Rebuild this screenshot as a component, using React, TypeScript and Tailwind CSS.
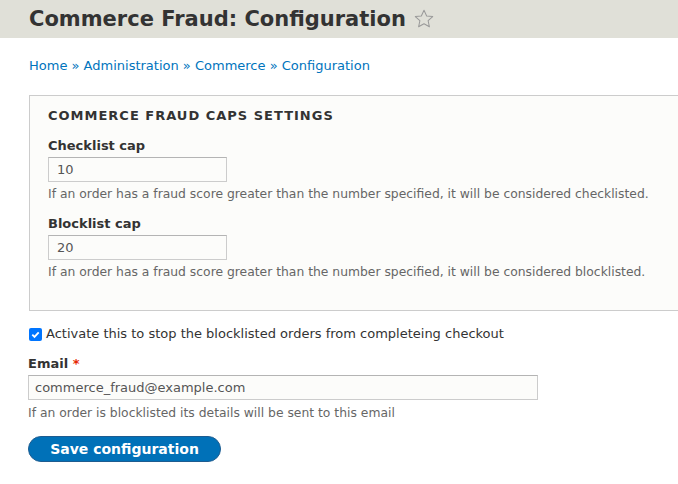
import React from "react";

const font = { fontFamily: '"DejaVu Sans", "Liberation Sans", sans-serif' };

export default function App() {
  return (
    <div className="w-[678px] h-[484px] overflow-hidden bg-white text-[#333]" style={font}>
      <div className="h-[38px] bg-[#e0e0d8] pl-[29px] flex items-center">
        <h1 className="text-[21px] font-bold text-[#333] leading-none flex items-center">
          Commerce Fraud: Configuration
          <svg width="22" height="22" viewBox="0 0 24 24" className="ml-[7px]" fill="none" stroke="#999" strokeWidth="1.1" strokeLinejoin="round">
            <path d="M12 2.5l2.9 6.2 6.6.7-5 4.5 1.4 6.6L12 17.2l-5.9 3.3 1.4-6.6-5-4.5 6.6-.7z" />
          </svg>
        </h1>
      </div>
      <div className="pl-[29px] pt-[20px] text-[13px] text-[#0074bd] leading-[16px]">
        Home » Administration » Commerce » Configuration
      </div>
      <div className="pl-[29px] pt-[21px]">
        <div className="border border-[#ccc] border-r-0 bg-[#fcfcfa] h-[216px] pl-[18px] pt-[12px]">
          <div className="text-[13px] font-bold uppercase tracking-[1px] text-[#333] leading-[16px]">
            Commerce Fraud Caps Settings
          </div>
          <div className="mt-[14px] text-[13px] font-bold leading-[16px]">Checklist cap</div>
          <div className="mt-[3px] w-[179px] h-[25px] border border-[#ccc] border-t-[#b4b4b4] bg-[#fcfcfa] text-[13px] text-[#555] pl-[8px] flex items-center">10</div>
          <div className="mt-[4px] text-[12.35px] text-[#666] leading-[16px]">
            If an order has a fraud score greater than the number specified, it will be considered checklisted.
          </div>
          <div className="mt-[14px] text-[13px] font-bold leading-[16px]">Blocklist cap</div>
          <div className="mt-[3px] w-[179px] h-[25px] border border-[#ccc] border-t-[#b4b4b4] bg-[#fcfcfa] text-[13px] text-[#555] pl-[8px] flex items-center">20</div>
          <div className="mt-[4px] text-[12.35px] text-[#666] leading-[16px]">
            If an order has a fraud score greater than the number specified, it will be considered blocklisted.
          </div>
        </div>
      </div>
      <div className="pl-[29px] pt-[15px] flex items-center text-[13px] leading-[16px]">
        <span className="w-[13px] h-[13px] rounded-[2px] bg-[#0075ff] flex items-center justify-center">
          <svg width="11" height="11" viewBox="0 0 12 12" fill="none" stroke="white" strokeWidth="2">
            <path d="M2.5 6.2l2.4 2.4 4.6-5" />
          </svg>
        </span>
        <span className="ml-[4px]">Activate this to stop the blocklisted orders from completeing checkout</span>
      </div>
      <div className="pl-[28px] pt-[14px] text-[13px] font-bold leading-[16px]">
        Email <span className="text-[#e62600]">*</span>
      </div>
      <div className="pl-[28px] pt-[3px]">
        <div className="w-[510px] h-[25px] border border-[#ccc] border-t-[#b4b4b4] bg-[#fcfcfa] text-[13px] text-[#555] pl-[6px] flex items-center">
          commerce_fraud@example.com
        </div>
      </div>
      <div className="pl-[28px] pt-[5px] text-[12.35px] text-[#666] leading-[16px]">
        If an order is blocklisted its details will be sent to this email
      </div>
      <div className="pl-[28px] pt-[15px]">
        <button className="w-[193px] h-[26px] rounded-[20px] bg-[#0071b8] border border-[#1e5c90] text-white font-bold text-[14px] leading-none">
          Save configuration
        </button>
      </div>
    </div>
  );
}
